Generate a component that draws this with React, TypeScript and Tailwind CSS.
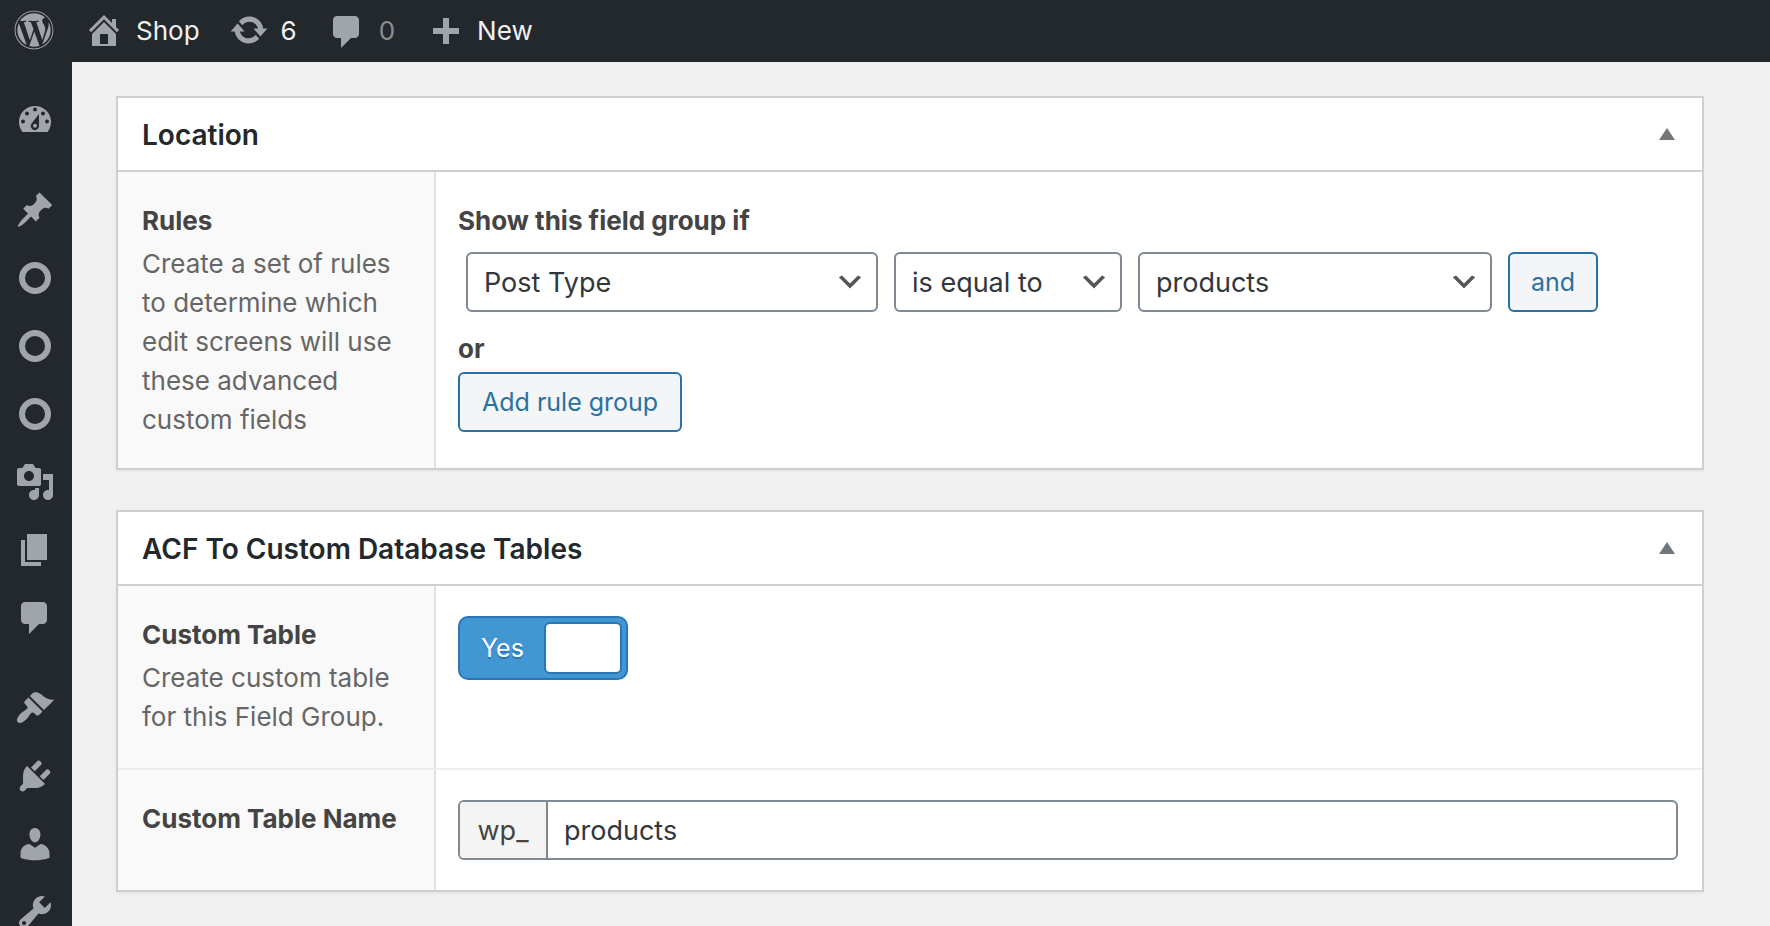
import React, { useState } from "react";
import { FaWordpress } from "react-icons/fa";

const ICONS = {
  home: "M16 8.5l1.53 1.53-1.06 1.06L10 4.6l-6.47 6.49-1.06-1.06L10 2.5l4 4v-2h2v4zm-6-2.46l6 5.99V18H4v-5.97zM12 17v-5H8v5h4z",
  update:
    "M10.2 3.28c3.53 0 6.43 2.61 6.92 6h2.08l-3.5 4-3.5-4h2.32c-.45-1.97-2.21-3.45-4.32-3.45-1.45 0-2.73.71-3.54 1.78L4.95 5.66C6.23 4.2 8.11 3.28 10.2 3.28zm-.4 13.44c-3.52 0-6.43-2.61-6.92-6H.8l3.5-4c1.17 1.33 2.33 2.67 3.5 4H5.48c.45 1.97 2.21 3.45 4.32 3.45 1.45 0 2.73-.71 3.54-1.78l1.71 1.95c-1.28 1.46-3.15 2.38-5.25 2.38z",
  bubble:
    "M5 3h9c1.1 0 2 .9 2 2v7c0 1.1-.9 2-2 2h-2l-5 5v-5H5c-1.1 0-2-.9-2-2V5c0-1.1.9-2 2-2z",
  comment:
    "M5 2h9c1.1 0 2 .9 2 2v7c0 1.1-.9 2-2 2h-2l-5 5v-5H5c-1.1 0-2-.9-2-2V4c0-1.1.9-2 2-2z",
  plus: "M17 9v3h-5v5H9v-5H4V9h5V4h3v5h5z",
  dashboard:
    "M3.76 17h12.48A8 8 0 1 0 3.76 17zM10 4.8a1 1 0 1 1 0 2 1 1 0 0 1 0-2zM6 6.8a1 1 0 1 1 0 2 1 1 0 0 1 0-2zM14 6.8a1 1 0 1 1 0 2 1 1 0 0 1 0-2zM4 10.8a1 1 0 1 1 0 2 1 1 0 0 1 0-2zM16 10.8a1 1 0 1 1 0 2 1 1 0 0 1 0-2zM12 8v6a2.05 2.05 0 1 1-3.7-1.2zM10 12.9a1 1 0 1 0 0 2 1 1 0 0 0 0-2z",
  pin: "M10.44 3.02l1.82-1.82 6.36 6.35-1.83 1.82c-1.05-.68-2.48-.57-3.41.36l-.75.75c-.92.93-1.04 2.35-.35 3.41l-1.83 1.82-2.41-2.41-2.8 2.79c-.42.42-3.38 2.71-3.8 2.29s1.86-3.39 2.28-3.81l2.79-2.79L4.1 9.36l1.83-1.82c1.05.69 2.48.57 3.4-.36l.75-.75c.93-.92 1.05-2.35.36-3.41z",
  ring: "M10 2a8 8 0 1 1 0 16 8 8 0 0 1 0-16zM10 5a5 5 0 1 0 0 10 5 5 0 0 0 0-10z",
  media:
    "M13 11V4c0-.55-.45-1-1-1h-1.67L9 1H5L3.67 3H2c-.55 0-1 .45-1 1v7c0 .55.45 1 1 1h10c.55 0 1-.45 1-1zM7 4.5c1.38 0 2.5 1.12 2.5 2.5S8.38 9.5 7 9.5 4.5 8.38 4.5 7 5.62 4.5 7 4.5zM14 6h5v10.5c0 1.38-1.12 2.5-2.5 2.5S14 17.88 14 16.5s1.12-2.5 2.5-2.5c.17 0 .34.02.5.05V9h-3V6zm-4 8.05V13h2v3.5c0 1.38-1.12 2.5-2.5 2.5S7 17.88 7 16.5 8.12 14 9.5 14c.17 0 .34.02.5.05z",
  pages: "M6 15V2h10v13H6zm-1 1h8v2H3V5h2v11z",
  brush:
    "M14.48 11.06L7.41 3.99l1.5-1.5c.5-.56 2.3-.47 3.51.32 1.21.8 1.43 1.28 2.91 2.1 1.18.64 2.45 1.26 4.45.85zm-.71.71L6.7 4.7 4.93 6.47c-.39.39-.39 1.02 0 1.41l1.06 1.06c.39.39.39 1.03 0 1.42-.6.6-1.43 1.11-2.21 1.69-.35.26-.7.53-1.01.84C1.43 14.23.4 16.08 1.4 17.07c.99 1 2.84-.03 4.18-1.36.31-.31.58-.66.85-1.02.57-.78 1.08-1.61 1.69-2.21.39-.39 1.02-.39 1.41 0l1.06 1.06c.39.39 1.02.39 1.41 0z",
  plug: "M13.11 4.36L9.87 7.6 8 5.73l3.24-3.24c.35-.34 1.05-.2 1.56.32.52.51.66 1.21.31 1.55zm-8 1.77l.91-1.12 9.01 9.01-1.19.84c-.71.71-2.63 1.16-3.82 1.16H6.14L4.9 17.26c-.59.59-1.54.59-2.12 0-.59-.58-.59-1.53 0-2.12l1.24-1.24v-3.88c0-1.13.4-3.19 1.09-3.89zm7.26 3.97l3.24-3.24c.34-.35 1.04-.21 1.55.31.52.51.66 1.21.31 1.55l-3.24 3.25z",
  user: "M10 9.25c-2.27 0-2.73-3.44-2.73-3.44C7 4.02 7.82 2 9.97 2c2.16 0 2.98 2.02 2.71 3.81 0 0-.41 3.44-2.68 3.44zm0 2.57L12.72 10c2.39 0 4.52 2.33 4.52 4.53v2.49s-3.65 1.13-7.24 1.13c-3.65 0-7.24-1.13-7.24-1.13v-2.49c0-2.25 1.94-4.48 4.47-4.48z",
  wrench:
    "M16.68 9.77c-1.34 1.34-3.3 1.67-4.95.99l-5.41 6.52c-.99.99-2.59.99-3.58 0s-.99-2.59 0-3.57l6.52-5.42c-.68-1.65-.35-3.61.99-4.95 1.28-1.28 3.12-1.62 4.72-1.06l-2.89 2.89 2.82 2.82 2.86-2.87c.53 1.58.18 3.39-1.08 4.65zM3.81 16.21c.4.39 1.04.39 1.43 0 .4-.4.4-1.04 0-1.43-.39-.4-1.03-.4-1.43 0-.39.39-.39 1.03 0 1.43z",
};

type IconName = keyof typeof ICONS;

function Icon({ name }: { name: IconName }) {
  return (
    <svg viewBox="0 0 20 20" className="size-10 shrink-0 fill-[#a0a5aa]" fillRule="evenodd" aria-hidden="true">
      <path d={ICONS[name]} />
    </svg>
  );
}

const MENU: { label: string; icon: IconName; gap?: string }[] = [
  { label: "Dashboard", icon: "dashboard" },
  { label: "Posts", icon: "pin", gap: "mt-6" },
  { label: "Products", icon: "ring" },
  { label: "Orders", icon: "ring" },
  { label: "Customers", icon: "ring" },
  { label: "Media", icon: "media" },
  { label: "Pages", icon: "pages" },
  { label: "Comments", icon: "comment" },
  { label: "Appearance", icon: "brush", gap: "mt-[22px]" },
  { label: "Plugins", icon: "plug" },
  { label: "Users", icon: "user" },
  { label: "Tools", icon: "wrench" },
];

function AdminBar() {
  return (
    <header className="flex h-[62px] shrink-0 items-center bg-[#23282d] pb-0.5 pl-[14px] text-[26px] text-[#f0f0f1]">
      <a href="#wordpress" aria-label="About WordPress" className="mr-[30px]">
        <FaWordpress className="size-10 text-[#a0a5aa]" aria-hidden="true" />
      </a>
      <a href="#shop" className="mr-[29px] flex items-center gap-3">
        <Icon name="home" />
        Shop
      </a>
      <a href="#updates" className="mr-[30px] flex items-center gap-3">
        <Icon name="update" />6
      </a>
      <a href="#comments" className="mr-[30px] flex items-center gap-3 text-[#8b8e91]">
        <Icon name="bubble" />0
      </a>
      <a href="#new" className="flex items-center gap-3">
        <Icon name="plus" />
        New
      </a>
    </header>
  );
}

function Sidebar() {
  return (
    <nav aria-label="Admin menu" className="w-[72px] shrink-0 bg-[#23282d] pt-[22px]">
      {MENU.map((item) => (
        <a
          key={item.label}
          href={"#" + item.label.toLowerCase()}
          aria-label={item.label}
          className={"flex h-[68px] items-center pl-[15px] " + (item.gap ?? "")}
        >
          <Icon name={item.icon} />
        </a>
      ))}
    </nav>
  );
}

function Panel({ title, children }: { title: string; children: React.ReactNode }) {
  const [open, setOpen] = useState(true);
  return (
    <section className="border-2 border-[#ccd0d4] bg-white shadow-[0_2px_2px_rgba(0,0,0,0.04)]">
      <div className="flex h-[74px] items-center justify-between border-b-2 border-[#ccd0d4] pr-[27px] pl-6">
        <h2 className="pt-0.5 text-[28px] font-semibold text-[#23282d]">{title}</h2>
        <button type="button" aria-label={"Toggle panel: " + title} aria-expanded={open} onClick={() => setOpen(!open)}>
          <svg viewBox="0 0 16 12" className="h-3 w-4 fill-[#72777c]" aria-hidden="true">
            <path d="M8 0l8 12H0z" />
          </svg>
        </button>
      </div>
      {open && children}
    </section>
  );
}

function Row({ label, className = "", children }: { label: React.ReactNode; className?: string; children: React.ReactNode }) {
  return (
    <div className={"flex " + className}>
      <div className="w-[318px] shrink-0 border-r-2 border-[#e1e1e1] bg-[#f9f9f9] pt-[30px] pr-6 pb-[29px] pl-6">
        {label}
      </div>
      <div className="min-w-0 flex-1 py-[30px] pr-6 pl-[22px]">{children}</div>
    </div>
  );
}

function Select({ label, options }: { label: string; options: string[] }) {
  return (
    <div className="relative">
      <select
        aria-label={label}
        className="h-[60px] w-full appearance-none rounded-md border-2 border-[#7e8993] bg-white pt-0.5 pr-12 pl-4 text-[27px] text-[#32373c]"
      >
        {options.map((o) => (
          <option key={o}>{o}</option>
        ))}
      </select>
      <svg viewBox="0 0 20 20" className="pointer-events-none absolute top-[14px] right-3 size-8 fill-[#555]" aria-hidden="true">
        <path d="M5 6l5 5 5-5 2 1-7 7-7-7 2-1z" />
      </svg>
    </div>
  );
}

const labelText = "block text-[26px] leading-[38px] font-bold text-[#444]";
const helpText = "mt-1 text-[26px] leading-[39px] text-[#666]";
const button = "h-[60px] rounded-md border-2 border-[#2b71a1] bg-[#f3f5f6] pt-0.5 text-[25px] text-[#2b71a1]";

export default function App() {
  const [custom, setCustom] = useState(true);
  const [table, setTable] = useState("products");
  return (
    <div className="flex h-screen flex-col overflow-hidden bg-[#f0f0f0] font-['Inter',sans-serif]">
      <AdminBar />
      <div className="flex min-h-0 flex-1">
        <Sidebar />
        <main className="flex min-w-0 flex-1 flex-col gap-10 pt-[34px] pr-[66px] pl-11">
          <Panel title="Location">
            <Row
              label={
                <>
                  <h3 className={labelText}>Rules</h3>
                  <p className={helpText}>
                    Create a set of rules to determine which edit screens will use these advanced custom fields
                  </p>
                </>
              }
            >
              <h4 className={labelText}>Show this field group if</h4>
              <div className="mt-3 grid grid-cols-[412fr_228fr_354fr_90px] gap-4 pr-20 pl-2">
                <Select label="Rule parameter" options={["Post Type", "Page Template", "User Role"]} />
                <Select label="Rule operator" options={["is equal to", "is not equal to"]} />
                <Select label="Rule value" options={["products", "post", "page"]} />
                <button type="button" className={button}>
                  and
                </button>
              </div>
              <h4 className={labelText + " mt-[18px]"}>or</h4>
              <button type="button" className={button + " mt-1 px-[22px]"}>
                Add rule group
              </button>
            </Row>
          </Panel>

          <Panel title="ACF To Custom Database Tables">
            <Row
              className="min-h-[182px]"
              label={
                <>
                  <label htmlFor="custom-table" className={labelText}>
                    Custom Table
                  </label>
                  <p className={helpText}>Create custom table for this Field Group.</p>
                </>
              }
            >
              <label className="flex h-16 w-[170px] cursor-pointer items-center justify-between rounded-[10px] border-2 border-[#2b76b5] bg-[#4297d3] pr-1 pl-[21px] text-[25px] text-white [text-shadow:0_2px_0_#2b76b5]">
                <input
                  id="custom-table"
                  type="checkbox"
                  role="switch"
                  className="sr-only"
                  checked={custom}
                  onChange={(e) => setCustom(e.target.checked)}
                />
                <span className="pt-0.5">{custom ? "Yes" : "No"}</span>
                <span className="h-[52px] w-[78px] rounded-md border-2 border-[#2b76b5] bg-white" />
              </label>
            </Row>
            <Row
              className="border-t-2 border-[#eee]"
              label={
                <label htmlFor="table-name" className={labelText}>
                  Custom Table Name
                </label>
              }
            >
              <div className="flex h-[60px] overflow-hidden rounded-md border-2 border-[#7e8993] bg-white text-[27px]">
                <span className="flex w-[88px] shrink-0 items-center justify-center border-r-2 border-[#7e8993] bg-[#f4f4f4] pt-0.5 text-[#444]">
                  wp_
                </span>
                <input
                  id="table-name"
                  type="text"
                  className="min-w-0 flex-1 px-4 pt-0.5 text-[#32373c] outline-none"
                  value={table}
                  onChange={(e) => setTable(e.target.value)}
                />
              </div>
            </Row>
          </Panel>
        </main>
      </div>
    </div>
  );
}
